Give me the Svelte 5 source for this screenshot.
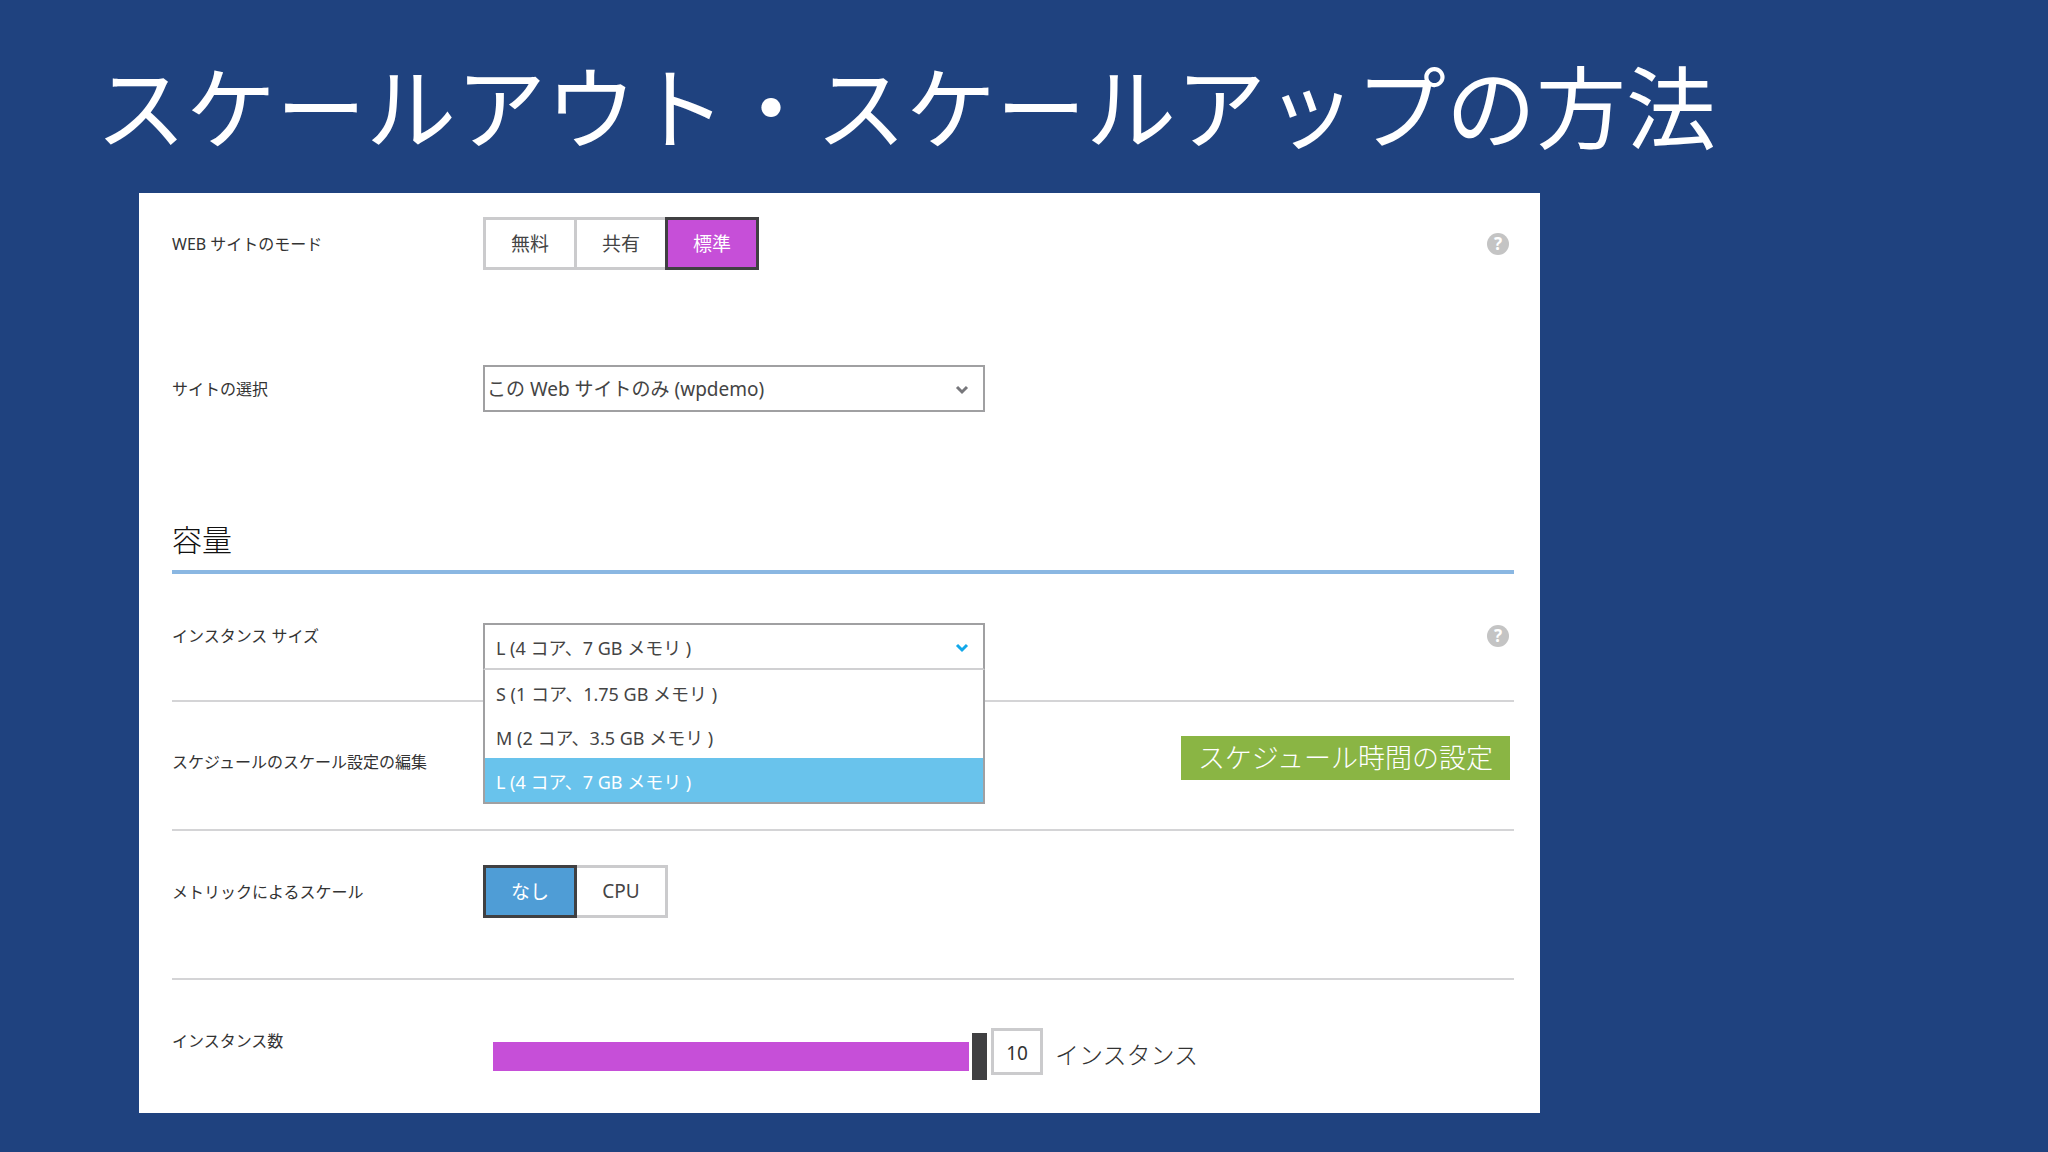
<script>
  const modes = ['無料', '共有', '標準']
  const metrics = ['なし', 'CPU']
  const sites = ['この Web サイトのみ (wpdemo)']
  const sizes = [
    'S (1 コア、1.75 GB メモリ )',
    'M (2 コア、3.5 GB メモリ )',
    'L (4 コア、7 GB メモリ )',
  ]

  let mode = $state('標準')
  let metric = $state('なし')
  let site = $state(sites[0])
  let size = $state(sizes[2])
  let menuOpen = $state(true)
  let count = $state(10)

  const fill = $derived((Math.min(Math.max(count, 1), 10) - 1) / 9)

  function toggleMenu(e) {
    e.preventDefault()
    menuOpen = !menuOpen
  }

  function pickSize(s) {
    size = s
    menuOpen = false
  }
</script>

{#snippet chevron()}
  <svg class="chevron" viewBox="0 0 14 10" aria-hidden="true">
    <path d="M2 2l5 5 5-5" fill="none" stroke="currentColor" stroke-width="3" />
  </svg>
{/snippet}

<main>
  <h1>スケールアウト・スケールアップの方法</h1>

  <div class="panel">
    <div class="row mode">
      <span class="label" id="mode-label">WEB サイトのモード</span>
      <div class="segments" role="group" aria-labelledby="mode-label">
        {#each modes as m}
          <button class:selected={mode === m} aria-pressed={mode === m} onclick={() => (mode = m)}>{m}</button>
        {/each}
      </div>
      <button class="help" aria-label="ヘルプ">?</button>
    </div>

    <div class="row site">
      <label class="label" for="site">サイトの選択</label>
      <div class="dropdown">
        <select id="site" bind:value={site}>
          {#each sites as s}<option>{s}</option>{/each}
        </select>
        {@render chevron()}
      </div>
    </div>

    <h2>容量</h2>

    <div class="row size">
      <label class="label" for="size">インスタンス サイズ</label>
      <div class="dropdown" class:open={menuOpen}>
        <select id="size" bind:value={size} onmousedown={toggleMenu}>
          {#each sizes as s}<option>{s}</option>{/each}
        </select>
        {@render chevron()}
        {#if menuOpen}
          <div class="menu" role="listbox" aria-label="インスタンス サイズ">
            {#each sizes as s}
              <button role="option" aria-selected={s === size} onclick={() => pickSize(s)}>{s}</button>
            {/each}
          </div>
        {/if}
      </div>
      <button class="help" aria-label="ヘルプ">?</button>
    </div>

    <div class="row schedule">
      <span class="label">スケジュールのスケール設定の編集</span>
      <button class="primary">スケジュール時間の設定</button>
    </div>

    <div class="row metric">
      <span class="label" id="metric-label">メトリックによるスケール</span>
      <div class="segments blue" role="group" aria-labelledby="metric-label">
        {#each metrics as m}
          <button class:selected={metric === m} aria-pressed={metric === m} onclick={() => (metric = m)}>{m}</button>
        {/each}
      </div>
    </div>

    <div class="row count">
      <label class="label" for="count">インスタンス数</label>
      <div class="slider">
        <input id="count" type="range" min="1" max="10" bind:value={count} style:--fill={fill} />
        <input class="number" type="text" inputmode="numeric" aria-label="インスタンス数" bind:value={count} />
        <span class="unit">インスタンス</span>
      </div>
    </div>
  </div>
</main>

<style>
  :global(body) { background: #1f427f; }

  main {
    padding-bottom: 38px;
    font-family: 'Noto Sans', 'Noto Sans CJK JP', sans-serif;
    color: #333;
  }

  button, select, input {
    font: inherit;
    color: inherit;
    margin: 0;
    box-sizing: border-box;
  }
  button { cursor: pointer; }

  h1 {
    margin: 0;
    padding: 43px 0 30px 96px;
    font-family: 'Noto Sans CJK JP', sans-serif;
    font-size: 90px;
    font-weight: 400;
    line-height: 120px;
    color: #fff;
  }

  .panel {
    margin: 0 508px 0 139px;
    padding: 24px 26px 0 33px;
    background: #fff;
  }

  .row {
    display: grid;
    grid-template-columns: 311px 1fr auto;
    align-items: center;
  }
  .label {
    font-size: 16px;
    line-height: 26px;
  }

  .site { margin-top: 95px; }
  .size, .schedule, .metric {
    border-bottom: 2px solid #d4d4d6;
  }
  .size {
    align-items: start;
    padding: 49px 0 30px;
  }
  .schedule {
    align-items: baseline;
    padding: 34px 0 49px;
  }
  .metric { padding: 34px 0 60px; }
  .count {
    align-items: start;
    padding: 48px 0 28px;
  }

  h2 {
    margin: 108px 0 0;
    padding-bottom: 10px;
    border-bottom: 4px solid #8ab7e2;
    font-size: 30px;
    font-weight: 300;
    line-height: 40px;
    color: #111;
  }

  .segments { display: flex; }
  .segments button {
    width: 94px;
    height: 53px;
    padding: 0 0 2px;
    border: 3px solid #cbcbcd;
    background: #fff;
    font-size: 19px;
    color: #444;
  }
  .segments button + button { margin-left: -3px; }
  .segments .selected {
    position: relative;
    border-color: #404042;
    background: #c64fd8;
    color: #fff;
  }
  .blue .selected { background: #4f9dd6; }

  .help {
    width: 22px;
    height: 22px;
    margin: 2px 5px;
    padding: 0;
    border: none;
    border-radius: 50%;
    background: #c4c4c4;
    color: #fff;
    font-size: 17px;
    font-weight: 700;
    line-height: 22px;
  }

  .dropdown {
    position: relative;
    width: 502px;
    height: 47px;
    font-size: 19px;
    color: #444;
  }
  .dropdown select {
    appearance: none;
    width: 100%;
    height: 100%;
    padding: 0 40px 0 2px;
    border: 2px solid #a0a0a2;
    border-radius: 0;
    background: #fff;
  }
  .dropdown.open select {
    padding-top: 2px;
    padding-left: 11px;
    border-bottom-color: #d0d0d2;
  }
  .size .dropdown { font-size: 18px; }
  .chevron {
    position: absolute;
    right: 16px;
    top: 20px;
    width: 14px;
    height: 10px;
    color: #77777b;
    pointer-events: none;
  }
  .open .chevron { color: #12a8ea; }

  .menu {
    position: absolute;
    top: 100%;
    left: 0;
    right: 0;
    z-index: 1;
    display: flex;
    flex-direction: column;
    border: 2px solid #a0a0a2;
    border-top: none;
    background: #fff;
  }
  .menu button {
    height: 44px;
    padding: 2px 11px 0;
    border: none;
    background: none;
    text-align: left;
  }
  .menu button[aria-selected='true'] {
    background: #69c3ec;
    color: #fff;
  }

  .primary {
    grid-column: 3;
    height: 44px;
    margin-right: 4px;
    padding: 0 17px;
    border: none;
    background: #8ab544;
    color: #fff;
    font-size: 27px;
    font-weight: 300;
    line-height: 44px;
  }

  .slider {
    display: flex;
    align-items: center;
    padding-left: 10px;
  }
  .slider input[type='range'] {
    appearance: none;
    width: 494px;
    height: 47px;
    background: none;
  }
  .slider input[type='range']::-webkit-slider-runnable-track {
    height: 29px;
    background: linear-gradient(#c64fd8, #c64fd8) no-repeat;
    background-size: calc((100% - 15px) * var(--fill) - 3px) 100%;
  }
  .slider input[type='range']::-webkit-slider-thumb {
    appearance: none;
    width: 15px;
    height: 47px;
    margin-top: -9px;
    background: #404042;
  }
  .slider .number {
    width: 52px;
    height: 47px;
    margin: 0 12px 10px 4px;
    padding: 2px 0 0;
    border: 3px solid #cbcbcd;
    text-align: center;
    font-size: 19px;
  }
  .unit {
    padding-bottom: 6px;
    font-size: 24px;
    font-weight: 300;
  }
</style>
